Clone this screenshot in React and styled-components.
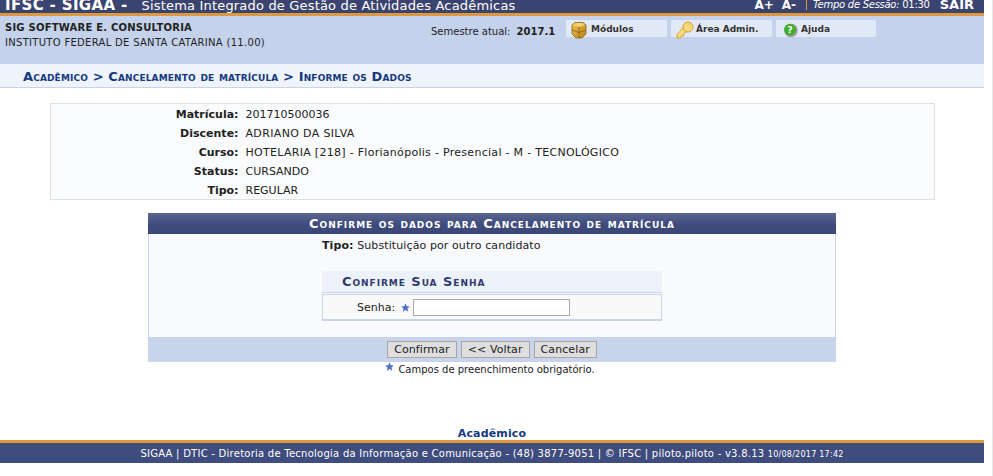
import { Fragment } from 'react';
import styled, { createGlobalStyle } from 'styled-components';

const GlobalStyle = createGlobalStyle`
  html, body {
    margin: 0;
    padding: 0;
    background: #fff;
    overflow: hidden;
  }
  body {
    font-family: "DejaVu Sans", Verdana, sans-serif;
    font-size: 11px;
    color: #222;
  }
`;

const ModuleIcon = () => (
  <svg width="16" height="18" viewBox="0 0 16 18">
    <defs>
      <linearGradient id="cube" x1="0" y1="0" x2="1" y2="1">
        <stop offset="0" stopColor="#f0c451" />
        <stop offset="1" stopColor="#b97f1c" />
      </linearGradient>
    </defs>
    <path d="M1 4 L4 1.5 L12 1.5 L15 4 L15 13 L11 17 L5 17 L1 13 Z" fill="url(#cube)" stroke="#8f6512" strokeWidth="0.8" />
    <path d="M2 4 L5 2 L11 2 L14 4 L8 6 Z" fill="#f2d271" />
    <path d="M8 6 V17 M1 9 L8 11.5 L15 9" stroke="#8f6512" strokeWidth="0.9" fill="none" />
  </svg>
);

const KeyIcon = () => (
  <svg width="18" height="18" viewBox="0 0 18 18">
    <path d="M7 7 L1 13.5 L1 17 L4.5 17 L5.5 15 L7.5 15 L7.5 13 L11 10 Z" fill="#f8dc7c" stroke="#d49c2c" strokeWidth="0.9" />
    <circle cx="12" cy="6" r="5" fill="#f8dc7c" stroke="#d49c2c" strokeWidth="1" />
    <circle cx="13.2" cy="4.6" r="1.2" fill="#fff6cf" stroke="#d49c2c" strokeWidth="0.5" />
  </svg>
);

const HelpIcon = () => (
  <svg width="15" height="16" viewBox="0 0 16 16">
    <circle cx="8.4" cy="8.4" r="7.2" fill="#9a9a9a" />
    <circle cx="7.5" cy="7.5" r="6.2" fill="#3fae2a" />
    <text x="7.5" y="11" textAnchor="middle" fontSize="10" fontWeight="700" fontFamily="DejaVu Sans" fill="#fff">?</text>
  </svg>
);

const Star = ({ size = 9 }) => (
  <svg width={size} height={size} viewBox="0 0 10 10">
    <path d="M5 0.4 L6.4 3.6 L9.8 3.9 L7.2 6.1 L8 9.6 L5 7.8 L2 9.6 L2.8 6.1 L0.2 3.9 L3.6 3.6 Z" fill="#4a72c8" />
  </svg>
);

const Page = styled.div`
  width: 993px;
  height: 476px;
  display: flex;
  flex-direction: column;
  position: relative;
  overflow: hidden;
`;

const Column = styled.div`
  width: 984px;
  height: 476px;
  display: flex;
  flex-direction: column;
`;

const TopBar = styled.div`
  height: 13px;
  background: #3b4470;
  border-bottom: 3px solid #dc9a3d;
  display: flex;
  align-items: center;
  overflow: hidden;
  color: #fff;
  flex: none;
`;

const Brand = styled.span`
  font-size: 15px;
  font-weight: 700;
  letter-spacing: 0.35px;
  margin-left: 5px;
  margin-top: -3px;
  white-space: nowrap;
`;

const SystemName = styled.span`
  font-size: 13px;
  letter-spacing: 0.18px;
  margin-left: 14px;
  margin-top: -3px;
  white-space: nowrap;
`;

const TopRight = styled.div`
  margin-left: auto;
  display: flex;
  align-items: center;
  margin-top: -4px;
  margin-right: 10px;
`;

const FontSizer = styled.span`
  font-size: 12px;
  font-weight: 700;
  margin-right: ${p => p.$gap}px;
`;

const Session = styled.span`
  border-left: 1px solid #dc9a3d;
  padding-left: 6px;
  margin-left: 3px;
  font-size: 10px;
  letter-spacing: -0.27px;
  white-space: nowrap;
  em {
    font-style: italic;
  }
`;

const Exit = styled.span`
  font-size: 13px;
  font-weight: 700;
  margin-left: 10px;
`;

const InfoBar = styled.div`
  height: 48px;
  background: #c4d2eb;
  display: flex;
  flex: none;
`;

const Institution = styled.div`
  width: 426px;
  padding: 4px 0 0 5px;
  font-size: 10px;
  line-height: 15px;
  letter-spacing: 0.3px;
  color: #222;
  white-space: nowrap;
  strong {
    display: block;
    letter-spacing: 0.22px;
  }
`;

const Semester = styled.div`
  width: 135px;
  padding-top: 9px;
  font-size: 10px;
  line-height: 13px;
  white-space: nowrap;
  strong {
    margin-left: 3px;
    font-size: 10px;
  }
`;

const MenuGroup = styled.div`
  display: flex;
  gap: 4px;
  padding-top: 4px;
`;

const MenuItem = styled.div`
  width: ${p => p.$width}px;
  height: 17px;
  background: #e2e9f6;
  display: flex;
  align-items: center;
  font-size: 9px;
  font-weight: 700;
  color: #333;
  white-space: nowrap;
  padding-left: ${p => p.$pad}px;
  box-sizing: border-box;
  gap: ${p => p.$gap}px;
  svg {
    flex: none;
    margin-top: 2px;
  }
`;

const Breadcrumb = styled.div`
  height: 22px;
  padding-top: 1px;
  background: #eff3fb;
  border-bottom: 1px solid #c9d3e6;
  padding-left: 23px;
  display: flex;
  align-items: center;
  font-size: 13px;
  font-weight: 700;
  font-variant: small-caps;
  letter-spacing: 0.13px;
  color: #14397f;
  flex: none;
`;

const Main = styled.div`
  flex: 1;
  display: flex;
  flex-direction: column;
  align-items: center;
  padding-top: 15px;
`;

const StudentBox = styled.div`
  width: 885px;
  height: 97px;
  box-sizing: border-box;
  background: #fafbfd;
  border: 1px solid #e0e0e0;
  padding-top: 1px;
  display: grid;
  grid-template-columns: 188px 1fr;
  grid-auto-rows: 19px;
  column-gap: 7px;
  line-height: 19px;
`;

const Label = styled.div`
  text-align: right;
  font-weight: 700;
`;

const Value = styled.div`
  white-space: nowrap;
  letter-spacing: ${p => p.$spacing}px;
`;

const Panel = styled.div`
  width: 688px;
  margin-top: 13px;
  box-sizing: border-box;
  background: #f9fafd;
  border: 1px solid #c9d4ea;
  border-top: 0;
`;

const Caption = styled.div`
  margin: 0 -1px;
  height: 21px;
  background: linear-gradient(#5a678f, #3f4b7d 55%, #3b4775);
  color: #fff;
  font-size: 13px;
  font-weight: 700;
  font-variant: small-caps;
  letter-spacing: 1px;
  text-align: center;
  line-height: 22px;
`;

const TypeRow = styled.div`
  margin-left: 173px;
  height: 22px;
  line-height: 24px;
  letter-spacing: 0.1px;
  strong {
    font-weight: 700;
  }
`;

const PasswordBox = styled.div`
  width: 340px;
  margin: 15px 0 0 173px;
`;

const PasswordTitle = styled.div`
  height: 21px;
  background: #edf1f9;
  border-bottom: 1px solid #c9d4ea;
  padding-left: 20px;
  font-size: 13px;
  font-weight: 700;
  font-variant: small-caps;
  letter-spacing: 0.95px;
  color: #2f3b6c;
  line-height: 22px;
`;

const PasswordRow = styled.div`
  margin-top: 1px;
  height: 27px;
  box-sizing: border-box;
  background: #f9f9f9;
  border: 1px solid #c9d4ea;
  border-bottom-width: 2px;
  display: flex;
  align-items: center;
  padding-left: 34px;
`;

const Required = styled.span`
  display: inline-flex;
  margin: 0 3px 0 6px;
`;

const PasswordInput = styled.input`
  width: 157px;
  height: 17px;
  box-sizing: border-box;
  border: 1px solid #a9a9a9;
  background: #fff;
  padding: 0;
`;

const ButtonBar = styled.div`
  margin-top: 16px;
  height: 24px;
  background: #c8d4ec;
  display: flex;
  justify-content: center;
  align-items: center;
  gap: 4px;
`;

const Button = styled.button`
  height: 17px;
  box-sizing: border-box;
  padding: 0 6px;
  background: #dedede;
  border: 1px solid #a6a6a6;
  border-radius: 0;
  font-family: inherit;
  font-size: 11px;
  letter-spacing: 0.1px;
  color: #222;
  line-height: 13px;
`;

const RequiredNote = styled.div`
  margin: 1px 4px 0 0;
  display: flex;
  align-items: flex-start;
  gap: 4px;
  font-size: 10px;
  line-height: 12px;
  padding-top: 1px;
  svg {
    margin-top: -2px;
  }
`;

const ModuleName = styled.div`
  color: #14397f;
  font-weight: 700;
  text-align: center;
  font-size: 11px;
  letter-spacing: 0.15px;
  line-height: 13px;
  padding-top: 1px;
  margin-top: -1px;
  flex: none;
`;

const Footer = styled.div`
  border-top: 3px solid #dc9a3d;
  height: 20px;
  background: #3f4c7e;
  color: #fff;
  font-size: 10px;
  letter-spacing: 0.25px;
  text-align: center;
  line-height: 21px;
  white-space: nowrap;
  margin-bottom: 13px;
  flex: none;
  small {
    font-size: 8px;
  }
`;

const EdgeLine = styled.div`
  position: absolute;
  top: 0;
  right: 0;
  bottom: 0;
  width: 1px;
  background: #e8e8e8;
`;

const students = [
  ['Matrícula:', '201710500036', 0],
  ['Discente:', 'ADRIANO DA SILVA', 0.35],
  ['Curso:', 'HOTELARIA [218] - Florianópolis - Presencial - M - TECNOLÓGICO', 0.29],
  ['Status:', 'CURSANDO', 0],
  ['Tipo:', 'REGULAR', 0],
];

export default function App() {
  return (
    <Page>
      <GlobalStyle />
      <Column>
        <TopBar>
          <Brand>IFSC - SIGAA -</Brand>
          <SystemName>Sistema Integrado de Gestão de Atividades Acadêmicas</SystemName>
          <TopRight>
            <FontSizer $gap={8}>A+</FontSizer>
            <FontSizer $gap={7}>A-</FontSizer>
            <Session><em>Tempo de Sessão:</em> 01:30</Session>
            <Exit>SAIR</Exit>
          </TopRight>
        </TopBar>
        <InfoBar>
          <Institution>
            <strong>SIG SOFTWARE E. CONSULTORIA</strong>
            INSTITUTO FEDERAL DE SANTA CATARINA (11.00)
          </Institution>
          <Semester>Semestre atual: <strong>2017.1</strong></Semester>
          <MenuGroup>
            <MenuItem $width={101} $pad={5} $gap={4}><ModuleIcon />Módulos</MenuItem>
            <MenuItem $width={101} $pad={5} $gap={2}><KeyIcon />Área Admin.</MenuItem>
            <MenuItem $width={100} $pad={7} $gap={3}><HelpIcon />Ajuda</MenuItem>
          </MenuGroup>
        </InfoBar>
        <Breadcrumb>Acadêmico &gt; Cancelamento de matrícula &gt; Informe os Dados</Breadcrumb>
        <Main>
          <StudentBox>
            {students.map(([label, value, spacing]) => (
              <Fragment key={label}>
                <Label>{label}</Label>
                <Value $spacing={spacing}>{value}</Value>
              </Fragment>
            ))}
          </StudentBox>
          <Panel>
            <Caption>Confirme os dados para Cancelamento de matrícula</Caption>
            <TypeRow><strong>Tipo:</strong> Substituição por outro candidato</TypeRow>
            <PasswordBox>
              <PasswordTitle>Confirme Sua Senha</PasswordTitle>
              <PasswordRow>
                Senha:
                <Required><Star /></Required>
                <PasswordInput type="password" />
              </PasswordRow>
            </PasswordBox>
            <ButtonBar>
              <Button>Confirmar</Button>
              <Button>&lt;&lt; Voltar</Button>
              <Button>Cancelar</Button>
            </ButtonBar>
          </Panel>
          <RequiredNote><Star />Campos de preenchimento obrigatório.</RequiredNote>
        </Main>
        <ModuleName>Acadêmico</ModuleName>
        <Footer>
          SIGAA | DTIC - Diretoria de Tecnologia da Informação e Comunicação - (48) 3877-9051 | © IFSC | piloto.piloto - v3.8.13 <small>10/08/2017 17:42</small>
        </Footer>
      </Column>
      <EdgeLine />
    </Page>
  );
}
